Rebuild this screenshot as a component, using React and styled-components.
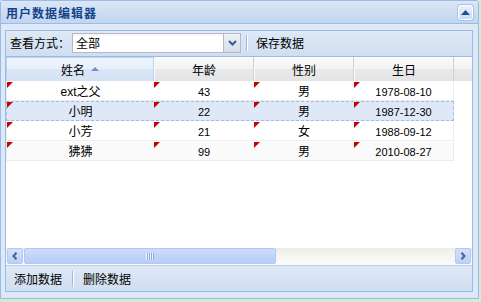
import React from 'react';
import styled, { createGlobalStyle, css } from 'styled-components';

const Global = createGlobalStyle`
  html, body { margin: 0; padding: 0; background: #d3ebd3; }
  body {
    font-family: "Liberation Sans", Arial, "Noto Sans CJK SC", sans-serif;
    font-size: 12px;
    color: #000;
  }
  * { box-sizing: border-box; }
`;

const Panel = styled.div`
  width: 479px;
  height: 299px;
  border: 1px solid #99bbe8;
  border-radius: 3px 3px 0 0;
  background: #dfe8f6;
  display: flex;
  flex-direction: column;
`;

const Header = styled.div`
  height: 23px;
  flex: none;
  border-bottom: 1px solid #99bbe8;
  background: linear-gradient(#dbe6f5 0%, #cfdff3 45%, #c2d6f0 100%);
  display: flex;
  align-items: center;
  justify-content: space-between;
  padding: 0 5px 0 5px;
`;

const Title = styled.span`
  font-family: "Noto Sans CJK SC", sans-serif;
  font-weight: bold;
  font-size: 12px;
  letter-spacing: 1px;
  color: #15428b;
  line-height: 14px;
  margin-top: 1px;
`;

const Tool = styled.div`
  width: 15px;
  height: 15px;
  border: 1px solid #fff;
  border-radius: 3px;
  background: linear-gradient(#eaf1fb, #c9daf3);
  box-shadow: 0 0 0 1px #a9c3e8;
  display: flex;
  align-items: center;
  justify-content: center;
  margin-top: 1px;
`;

const Frame = styled.div`
  flex: 1;
  padding: 6px 5px 6px 4px;
  display: flex;
  min-height: 0;
`;

const GridBox = styled.div`
  flex: 1;
  border: 1px solid #99bbe8;
  background: #fff;
  display: flex;
  flex-direction: column;
  min-width: 0;
`;

const Toolbar = styled.div`
  height: 26px;
  flex: none;
  display: flex;
  align-items: center;
  background: linear-gradient(#dfe9f6, #d0def0);
  ${p => p.$top ? css`
    border-bottom: 1px solid #99bbe8;
    padding: 0 0 1px 4px;
  ` : css`
    border-top: 1px solid #b9cfee;
    padding: 0 0 0 8px;
  `}
`;

const Label = styled.span`
  font-family: "Noto Sans CJK SC", sans-serif;
  font-size: 12px;
  line-height: 14px;
  margin-right: 2px;
`;

const Combo = styled.div`
  display: flex;
  height: 20px;
`;

const ComboInput = styled.div`
  width: 151px;
  height: 20px;
  border: 1px solid #b5b8c8;
  border-right: none;
  background: linear-gradient(#f4f4f4 0, #fff 3px, #fff);
  font-family: "Noto Sans CJK SC", sans-serif;
  font-size: 12px;
  line-height: 18px;
  padding-left: 3px;
`;

const Trigger = styled.div`
  width: 18px;
  height: 20px;
  border: 1px solid #b5b8c8;
  background: linear-gradient(#eef1f6, #d7dee9);
  display: flex;
  align-items: center;
  justify-content: center;
`;

const Sep = styled.span`
  width: 2px;
  height: 16px;
  border-left: 1px solid #99bbe8;
  border-right: 1px solid #fff;
  margin: ${p => p.$m};
`;

const TbButton = styled.span`
  font-family: "Noto Sans CJK SC", sans-serif;
  font-size: 12px;
  line-height: 14px;
`;

const HeadRow = styled.div`
  height: 24px;
  flex: none;
  display: flex;
  background: linear-gradient(#fafafa 0%, #f3f3f3 50%, #e9e9ea 52%, #e3e4e6 100%);
`;

const HeadCell = styled.div`
  width: ${p => p.$w}px;
  flex: none;
  height: 24px;
  border-right: 1px solid #d0d0d0;
  border-left: 1px solid #fafafa;
  display: flex;
  align-items: center;
  justify-content: center;
  gap: 6px;
  font-family: "Noto Sans CJK SC", sans-serif;
  font-size: 12px;
  ${p => p.$sorted && css`
    background: linear-gradient(#eff5fd 0%, #e8f0fb 45%, #d9e6f7 52%, #d4e2f5 100%);
    border: 1px solid #bcd2ef;
    border-bottom: none;
  `}
`;

const SortArrow = styled.span`
  width: 0;
  height: 0;
  border-left: 4px solid transparent;
  border-right: 4px solid transparent;
  border-bottom: 4px solid #6d91d2;
  margin-top: -1px;
`;

const Body = styled.div`
  flex: 1;
  background: #fff;
  min-height: 0;
`;

const Row = styled.div`
  width: 448px;
  height: 20px;
  display: flex;
  border: 1px solid #ededed;
  border-top-color: #fff;
  background: ${p => p.$alt ? '#fafafa' : '#fff'};
  ${p => p.$sel && css`
    background: #dfe8f6;
    border: 1px dashed #a3bae9;
  `}
`;

const Cell = styled.div`
  position: relative;
  width: ${p => p.$w}px;
  flex: none;
  display: flex;
  align-items: center;
  justify-content: center;
  font-size: ${p => p.$cjk ? 12 : 11}px;
  font-family: ${p => p.$cjk ? '"Liberation Sans", Arial, "Noto Sans CJK SC", sans-serif' : '"Liberation Sans", Arial, sans-serif'};
  line-height: 14px;
  padding-top: 1px;
  &::before {
    content: "";
    position: absolute;
    left: 0;
    top: 0;
    width: 0;
    height: 0;
    border-top: 6px solid #c90000;
    border-right: 6px solid transparent;
  }
`;

const HScroll = styled.div`
  height: 17px;
  flex: none;
  display: flex;
  background: linear-gradient(#eeede5, #f5f4ef 40%, #fbfbf9);
  padding: 0 1px;
`;

const ScrollBtn = styled.div`
  width: 16px;
  height: 16px;
  margin-top: 0;
  border: 1px solid #b5c9f1;
  border-radius: 2px;
  background: linear-gradient(#d3e1fc, #bbcff8);
  display: flex;
  align-items: center;
  justify-content: center;
`;

const Track = styled.div`
  flex: 1;
  display: flex;
  padding: 0 1px;
`;

const Thumb = styled.div`
  width: 252px;
  height: 16px;
  border: 1px solid #b3c8f3;
  border-radius: 2px;
  background: linear-gradient(#cfddfb, #c1d4f8 50%, #b8cdf7);
  display: flex;
  align-items: center;
  justify-content: center;
`;

const Grip = styled.div`
  width: 8px;
  height: 7px;
  background: repeating-linear-gradient(90deg, #eef3fe 0 1px, #8ea9e2 1px 2px);
`;

const columns = [
  { key: 'name', title: '姓名', w: 148, cw: 147, sorted: true, cjk: true },
  { key: 'age', title: '年龄', w: 100, cw: 100 },
  { key: 'sex', title: '性别', w: 100, cw: 100, cjk: true },
  { key: 'birth', title: '生日', w: 100, cw: 99 },
];

const rows = [
  { name: 'ext之父', age: '43', sex: '男', birth: '1978-08-10' },
  { name: '小明', age: '22', sex: '男', birth: '1987-12-30' },
  { name: '小芳', age: '21', sex: '女', birth: '1988-09-12' },
  { name: '狒狒', age: '99', sex: '男', birth: '2010-08-27' },
];

export default function App() {
  return (
    <>
      <Global />
      <Panel>
        <Header>
          <Title>用户数据编辑器</Title>
          <Tool>
            <svg width="9" height="5" viewBox="0 0 9 5"><polygon points="0,5 4.5,0 9,5" fill="#1e4d9e" /></svg>
          </Tool>
        </Header>
        <Frame>
          <GridBox>
            <Toolbar $top>
              <Label>查看方式：</Label>
              <Combo>
                <ComboInput>全部</ComboInput>
                <Trigger>
                  <svg width="9" height="6" viewBox="0 0 9 6">
                    <path d="M1 1 L4.5 4.5 L8 1" fill="none" stroke="#3b5b95" strokeWidth="2" />
                  </svg>
                </Trigger>
              </Combo>
              <Sep $m="0 8px 0 5px" />
              <TbButton>保存数据</TbButton>
            </Toolbar>
            <HeadRow>
              {columns.map(c => (
                <HeadCell key={c.key} $w={c.w} $sorted={c.sorted}>
                  {c.title}
                  {c.sorted && <SortArrow />}
                </HeadCell>
              ))}
            </HeadRow>
            <Body>
              {rows.map((r, i) => (
                <Row key={i} $sel={i === 1} $alt={i === 3}>
                  {columns.map(c => (
                    <Cell key={c.key} $w={c.cw} $cjk={c.cjk}>{r[c.key]}</Cell>
                  ))}
                </Row>
              ))}
            </Body>
            <HScroll>
              <ScrollBtn>
                <svg width="6" height="8" viewBox="0 0 6 8"><path d="M4.5 0.8 L1.5 4 L4.5 7.2" fill="none" stroke="#4d6185" strokeWidth="2" /></svg>
              </ScrollBtn>
              <Track>
                <Thumb><Grip /></Thumb>
              </Track>
              <ScrollBtn>
                <svg width="6" height="8" viewBox="0 0 6 8"><path d="M1.5 0.8 L4.5 4 L1.5 7.2" fill="none" stroke="#4d6185" strokeWidth="2" /></svg>
              </ScrollBtn>
            </HScroll>
            <Toolbar>
              <TbButton>添加数据</TbButton>
              <Sep $m="0 9px 0 10px" />
              <TbButton>删除数据</TbButton>
            </Toolbar>
          </GridBox>
        </Frame>
      </Panel>
    </>
  );
}
